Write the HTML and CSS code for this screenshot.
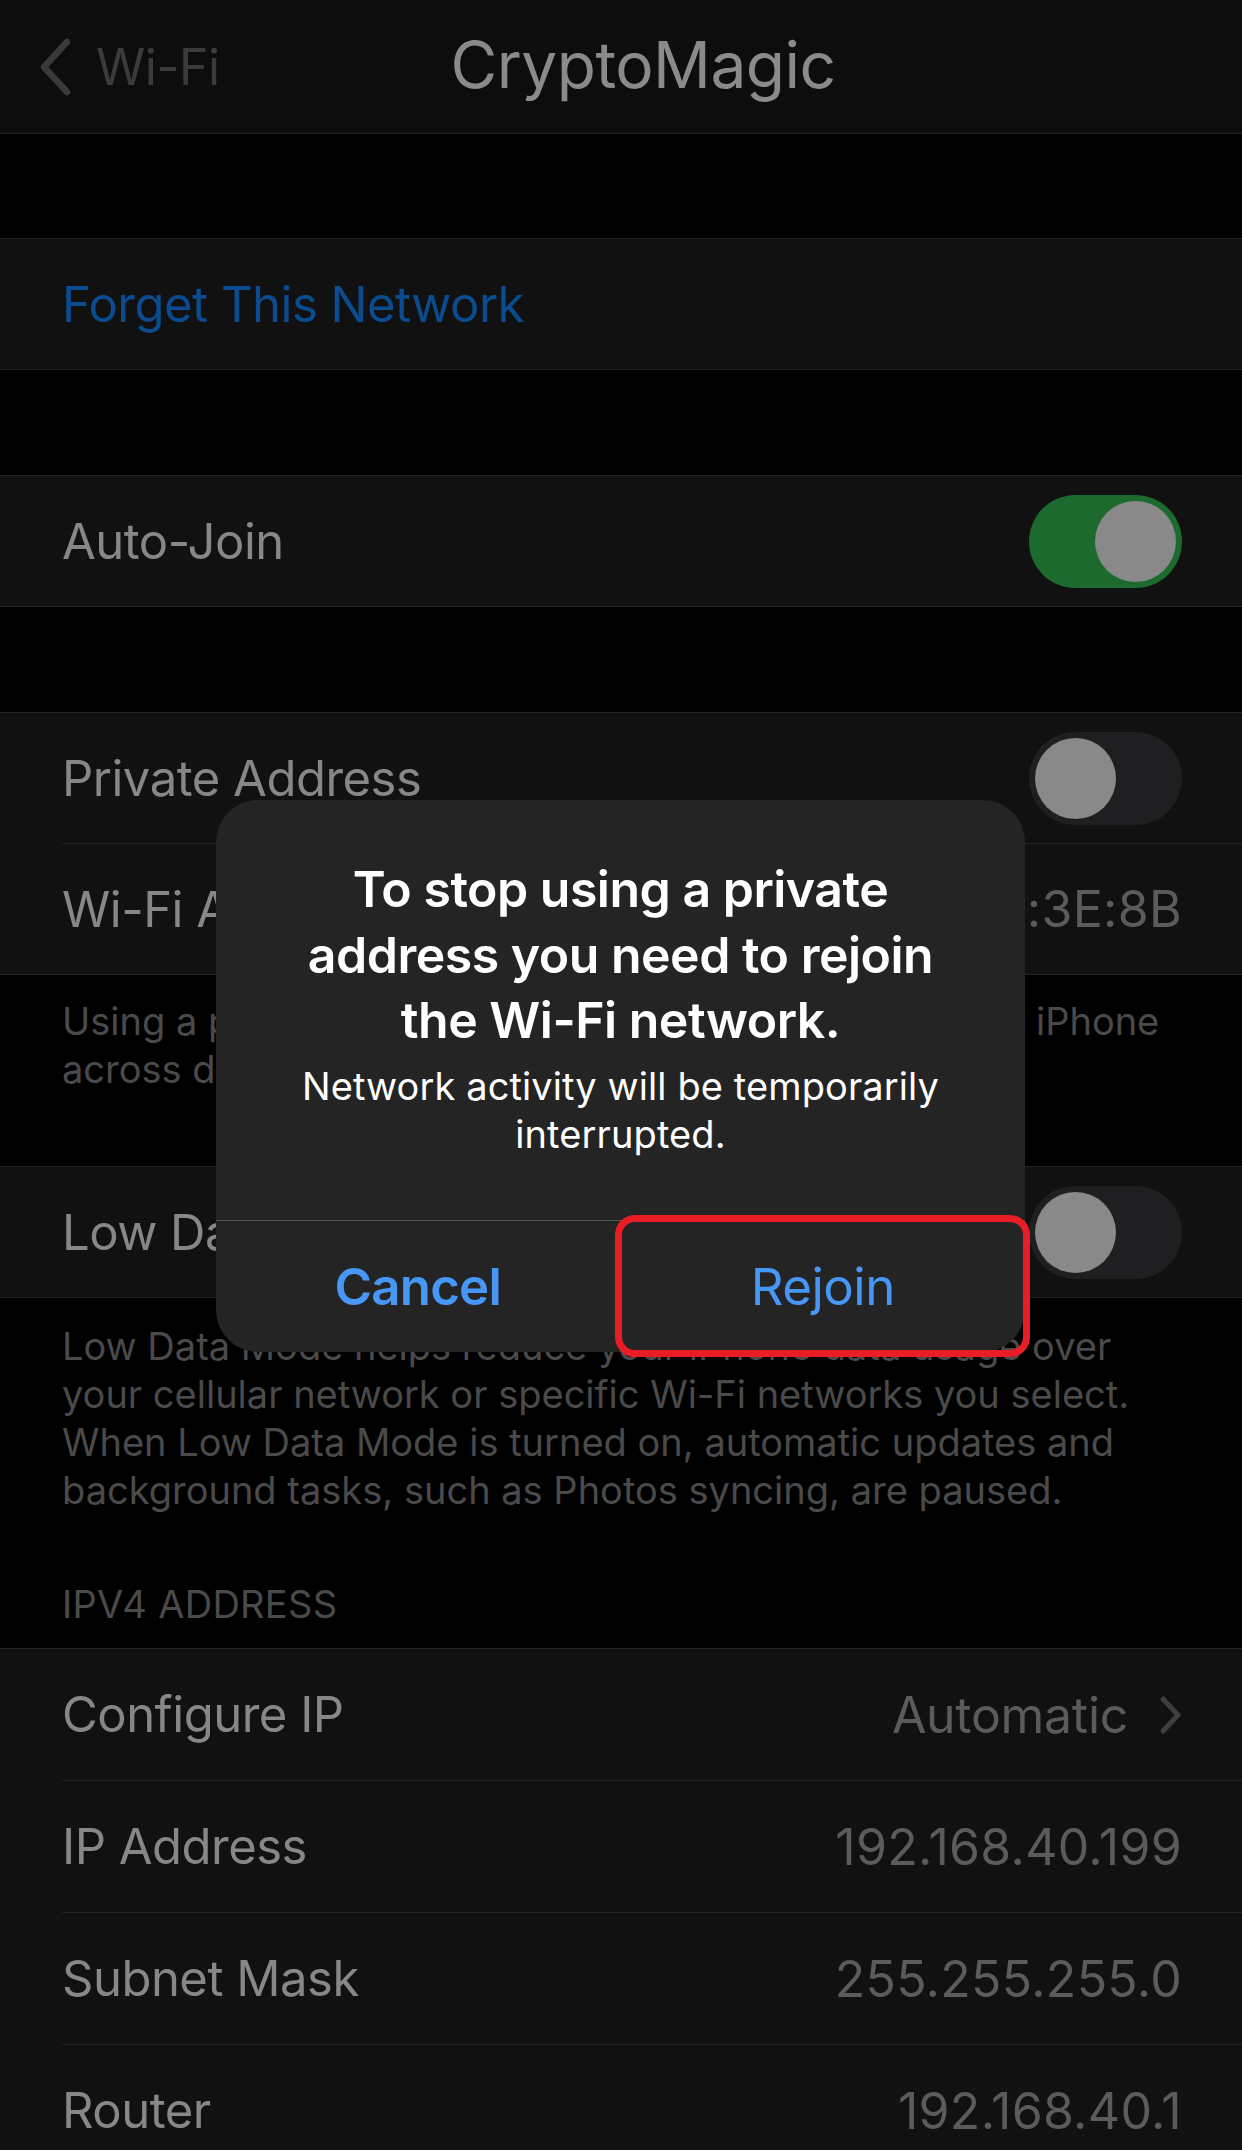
FILE: index.html
```html
<!DOCTYPE html>
<html lang="en">
<head>
<meta charset="utf-8">
<title>CryptoMagic</title>
<link rel="stylesheet" href="styles.css">
</head>
<body>
<div class="screen">
  <header class="nav">
    <div class="back">
      <svg class="back-chevron" width="34" height="58" viewBox="0 0 34 58"><path d="M29 4 L6 29 L29 54" fill="none" stroke="#3a3a3a" stroke-width="6.5" stroke-linecap="round" stroke-linejoin="round"/></svg>
      <span class="back-label">Wi-Fi</span>
    </div>
    <h1 class="title">CryptoMagic</h1>
    <div></div>
  </header>

  <section class="group g-first">
    <div class="cell"><span class="link">Forget This Network</span></div>
  </section>

  <section class="group g-next">
    <div class="cell">
      <span class="label">Auto-Join</span>
      <span class="toggle on"><span class="knob"></span></span>
    </div>
  </section>

  <section class="group g-next">
    <div class="cell">
      <span class="label">Private Address</span>
      <span class="toggle off"><span class="knob"></span></span>
    </div>
    <div class="cell">
      <span class="label">Wi-Fi Address</span>
      <span class="value">A2:5F:7C:D1:3E:8B</span>
    </div>
  </section>
  <p class="footer f-private">Using a private address helps reduce tracking of your iPhone<br>across different Wi-Fi networks.</p>

  <section class="group">
    <div class="cell">
      <span class="label">Low Data Mode</span>
      <span class="toggle off"><span class="knob"></span></span>
    </div>
  </section>
  <p class="footer f-low">Low Data Mode helps reduce your iPhone data usage over<br>your cellular network or specific Wi-Fi networks you select.<br>When Low Data Mode is turned on, automatic updates and<br>background tasks, such as Photos syncing, are paused.</p>

  <h2 class="section-header">IPV4 ADDRESS</h2>
  <section class="group g-ipv4">
    <div class="cell">
      <span class="label">Configure IP</span>
      <span class="value with-chevron">Automatic
        <svg class="chevron" width="26" height="40" viewBox="0 0 26 40"><path d="M5 4 L20 20 L5 36" fill="none" stroke="#3e3e40" stroke-width="5" stroke-linecap="round" stroke-linejoin="round"/></svg>
      </span>
    </div>
    <div class="cell">
      <span class="label">IP Address</span>
      <span class="value">192.168.40.199</span>
    </div>
    <div class="cell">
      <span class="label">Subnet Mask</span>
      <span class="value">255.255.255.0</span>
    </div>
    <div class="cell">
      <span class="label">Router</span>
      <span class="value">192.168.40.1</span>
    </div>
  </section>

  <div class="alert">
    <div class="alert-body">
      <p class="alert-title">To stop using a private<br>address you need to rejoin<br>the Wi-Fi network.</p>
      <p class="alert-message">Network activity will be temporarily<br>interrupted.</p>
    </div>
    <div class="alert-actions">
      <div class="alert-btn cancel">Cancel</div>
      <div class="alert-btn rejoin">Rejoin</div>
    </div>
  </div>
  <div class="highlight"></div>
</div>
</body>
</html>
```
FILE: styles.css
```css
* { box-sizing: border-box; }
html, body {
  margin: 0;
  padding: 0;
  background: #000;
}
body {
  width: 1242px;
  height: 2150px;
  overflow: hidden;
  font-family: "Inter", "Liberation Sans", sans-serif;
}
.screen {
  position: relative;
  width: 1242px;
  height: 2150px;
  overflow: hidden;
}

/* nav */
.nav {
  height: 134px;
  background: #0d0d0d;
  border-bottom: 1px solid #222;
  display: grid;
  grid-template-columns: 1fr auto 1fr;
  align-items: center;
}
.back {
  display: flex;
  align-items: center;
  padding-left: 38px;
  gap: 24px;
}
.back-chevron { display: block; }
.back-label {
  font-size: 50px;
  color: #3b3b3b;
  letter-spacing: -0.5px;
}
.title {
  margin: -4px 0 0 44px;
  font-size: 64px;
  font-weight: 400;
  color: #8a8a8a;
  letter-spacing: -0.5px;
}

/* groups */
.group {
  background: #111;
  border-top: 1px solid #232323;
  border-bottom: 1px solid #232323;
  padding-left: 62px;
}
.g-first { margin-top: 104px; }
.g-next { margin-top: 105px; }
.cell {
  height: 130px;
  padding-right: 60px;
  display: flex;
  align-items: center;
  justify-content: space-between;
}
.cell + .cell { border-top: 1px solid #222; height: 131px; }
.g-ipv4 .cell { height: 131px; }
.g-ipv4 .cell + .cell { height: 132px; }
.label {
  font-size: 49px;
  color: #878787;
  letter-spacing: -0.5px;
}
.link {
  font-size: 49px;
  color: #0b4b90;
  letter-spacing: -0.5px;
}
.value {
  font-size: 50px;
  color: #5b5b5d;
  letter-spacing: 0.3px;
}
.with-chevron {
  display: flex;
  align-items: center;
  gap: 30px;
  margin-right: -2px;
  letter-spacing: -0.3px;
}
.chevron { display: block; }

/* toggles */
.toggle {
  width: 153px;
  height: 93px;
  border-radius: 47px;
  padding: 6px;
  display: flex;
  align-items: center;
}
.toggle.on { background: #1c6a2e; justify-content: flex-end; }
.toggle.off { background: #1f1f21; justify-content: flex-start; }
.knob {
  width: 81px;
  height: 81px;
  border-radius: 50%;
  background: #898989;
}

/* footers */
.footer {
  margin: 0;
  padding: 22px 30px 73px 62px;
  font-size: 38px;
  line-height: 48px;
  color: #4a4a4a;
  letter-spacing: 0;
}
.f-low { padding-top: 24px; padding-bottom: 0; }
.section-header {
  margin: 66px 0 0 0;
  padding: 0 0 20px 62px;
  font-size: 38px;
  line-height: 48px;
  font-weight: 400;
  color: #4a4a4a;
  letter-spacing: 0.3px;
}

/* alert */
.alert {
  position: absolute;
  left: 216px;
  top: 800px;
  width: 809px;
  background: #242424;
  border-radius: 42px;
  overflow: hidden;
}
.alert-body {
  padding: 57px 30px 62px;
  text-align: center;
}
.alert-title {
  margin: 0;
  font-size: 50px;
  line-height: 65.5px;
  font-weight: 600;
  color: #fff;
  letter-spacing: -0.5px;
}
.alert-message {
  margin: 8px 0 0;
  font-size: 38px;
  line-height: 48px;
  color: #fff;
  letter-spacing: 0.1px;
}
.alert-actions {
  border-top: 1px solid #555;
  display: grid;
  grid-template-columns: 1fr 1fr;
  height: 132px;
}
.alert-btn {
  display: flex;
  align-items: center;
  justify-content: center;
  font-size: 51px;
  color: #4797f7;
  letter-spacing: -0.5px;
}
.alert-btn.cancel {
  font-weight: 600;
  letter-spacing: -0.8px;
  border-right: 1px solid #555;
}
.highlight {
  position: absolute;
  left: 615px;
  top: 1215px;
  width: 415px;
  height: 142px;
  border: 7px solid #e81d25;
  border-radius: 20px;
}
```
